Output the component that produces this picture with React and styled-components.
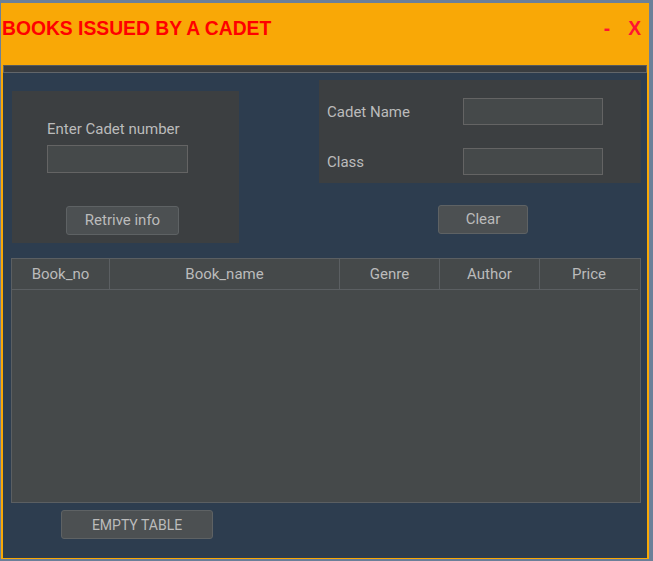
import React from "react";
import styled, { createGlobalStyle } from "styled-components";

const Global = createGlobalStyle`
  html, body { margin: 0; padding: 0; background: #6b8099; }
  body { width: 653px; height: 561px; overflow: hidden; }
  * { box-sizing: border-box; }
`;

const Window = styled.div`
  margin: 3px 0 0 1px;
  width: 648px;
  height: 556px;
  border-left: 2px solid #f9a806;
  border-right: 2px solid #f9a806;
  border-bottom: 1px solid #f9a806;
  background: #2d3d4f;
  display: flex;
  flex-direction: column;
  font-family: Roboto, "Liberation Sans", sans-serif;
`;

const TitleBar = styled.div`
  height: 62px;
  background: #f9a806;
  display: flex;
  justify-content: space-between;
  align-items: flex-start;
  padding: 16px 6px 0 0;
  font-family: "Liberation Sans", Arial, sans-serif;
  font-weight: bold;
  font-size: 19.3px;
  line-height: 19px;
`;

const Title = styled.div`
  color: #ff0000;
  margin-left: -1px;
`;

const Controls = styled.div`
  display: flex;
  gap: 18px;
  color: #ff1432;
`;

const Control = styled.span`
  cursor: pointer;
`;

const SeparatorBar = styled.div`
  height: 8px;
  border: 1px solid #62666a;
  background: #3a3d40;
  border-top-color: #55595c;
`;

const Body = styled.div`
  display: flex;
  flex-direction: column;
  align-items: flex-start;
`;

const TopRow = styled.div`
  display: flex;
  align-items: flex-start;
`;

const Panel = styled.div`
  background: #3c3f41;
`;

const LeftPanel = styled(Panel)`
  margin: 18px 0 0 9px;
  width: 227px;
  height: 152px;
  padding: 29px 0 0 35px;
  display: flex;
  flex-direction: column;
  align-items: flex-start;
`;

const Label = styled.div`
  color: #bbbbbb;
  font-size: 15px;
  line-height: 18px;
  white-space: nowrap;
`;

const Field = styled.input`
  width: ${(p) => p.$w || 140}px;
  height: ${(p) => p.$h || 27}px;
  background: #45494a;
  border: 1px solid #646464;
  color: #bbbbbb;
  font-family: inherit;
  font-size: 15px;
  padding: 0 4px;
  outline: none;
  margin-top: ${(p) => p.$mt || 0}px;
`;

const Button = styled.button`
  width: ${(p) => p.$w}px;
  height: 29px;
  margin-top: ${(p) => p.$mt || 0}px;
  margin-left: ${(p) => p.$ml || 0}px;
  background: #4c5052;
  border: 1px solid #5e6264;
  border-radius: 3px;
  color: #bbbbbb;
  font-family: Roboto, "Liberation Sans", sans-serif;
  font-size: ${(p) => p.$fs || 15}px;
  line-height: 1;
  padding: 0;
  cursor: pointer;
`;

const RightColumn = styled.div`
  margin: 7px 0 0 80px;
  display: flex;
  flex-direction: column;
  align-items: flex-start;
`;

const FormPanel = styled(Panel)`
  width: 322px;
  height: 103px;
  padding: 18px 0 0 8px;
  display: grid;
  grid-template-columns: 136px 140px;
  grid-auto-rows: 27px;
  row-gap: 23px;
  align-items: center;
`;

const Table = styled.div`
  margin: 15px 0 0 8px;
  width: 630px;
  height: 245px;
  border: 1px solid #5b5f62;
  background: #45494a;
`;

const HeaderRow = styled.div`
  display: grid;
  grid-template-columns: 98px 230px 100px 100px 1fr;
  height: 31px;
  border-bottom: 1px solid #5b5f62;
  margin-right: 2px;
`;

const HeaderCell = styled.div`
  display: flex;
  align-items: center;
  justify-content: center;
  color: #bbbbbb;
  font-size: 15px;
  border-right: ${(p) => (p.$last ? "none" : "1px solid #5b5f62")};
`;

const columns = ["Book_no", "Book_name", "Genre", "Author", "Price"];

export default function App() {
  return (
    <>
      <Global />
      <Window>
        <TitleBar>
          <Title>BOOKS ISSUED BY A CADET</Title>
          <Controls>
            <Control>-</Control>
            <Control>X</Control>
          </Controls>
        </TitleBar>
        <SeparatorBar />
        <Body>
          <TopRow>
            <LeftPanel>
              <Label>Enter Cadet number</Label>
              <Field $w={141} $h={28} $mt={7} />
              <Button $w={113} $mt={33} $ml={19}>Retrive info</Button>
            </LeftPanel>
            <RightColumn>
              <FormPanel>
                <Label>Cadet Name</Label>
                <Field />
                <Label>Class</Label>
                <Field />
              </FormPanel>
              <Button $w={90} $mt={22} $ml={119}>Clear</Button>
            </RightColumn>
          </TopRow>
          <Table>
            <HeaderRow>
              {columns.map((c, i) => (
                <HeaderCell key={c} $last={i === columns.length - 1}>
                  {c}
                </HeaderCell>
              ))}
            </HeaderRow>
          </Table>
          <Button $w={152} $mt={7} $ml={58} $fs={14}>EMPTY TABLE</Button>
        </Body>
      </Window>
    </>
  );
}
